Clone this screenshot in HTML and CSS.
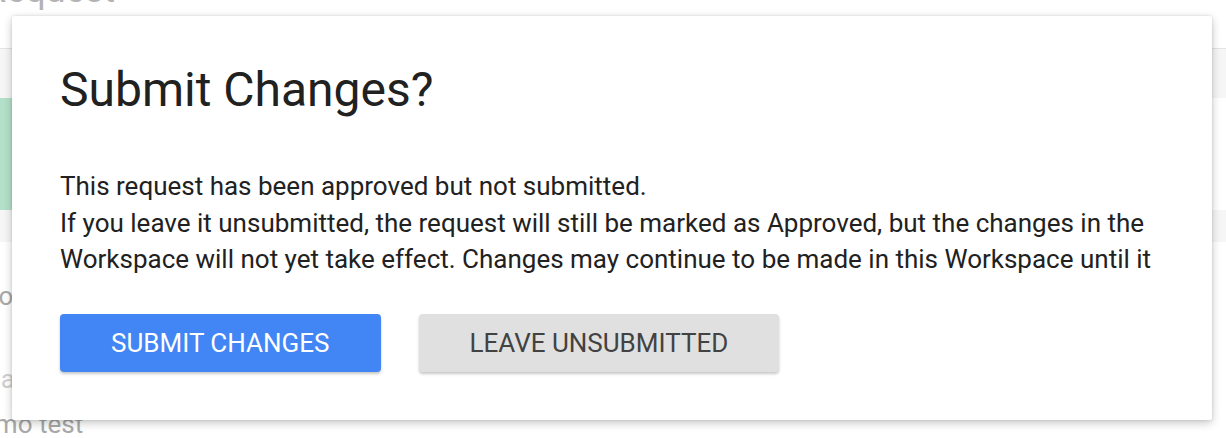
FILE: index.html
```html
<!DOCTYPE html>
<html lang="en">
<head>
<meta charset="utf-8">
<title>Submit Changes?</title>
<link rel="stylesheet" href="styles.css">
</head>
<body>
<div class="page">
  <h1 class="page-title">Request</h1>
  <div class="table">
    <div class="table-head"></div>
    <div class="status-row"><div class="status-block"></div></div>
    <div class="table-subhead"></div>
    <div class="fields">
      <div class="field field-info">Info</div>
      <div class="field field-plan">Plan</div>
      <div class="field field-name">Demo test</div>
    </div>
  </div>
</div>

<div class="dialog" role="dialog" aria-labelledby="dlg-title">
  <h2 class="dialog-title" id="dlg-title">Submit Changes?</h2>
  <div class="dialog-body">
    This request has been approved but not submitted.<br>
    If you leave it unsubmitted, the request will still be marked as Approved, but the changes in the Workspace will not yet take effect. Changes may continue to be made in this Workspace until it is submitted.
  </div>
  <div class="dialog-actions">
    <button class="btn btn-primary">Submit Changes</button>
    <button class="btn btn-secondary">Leave Unsubmitted</button>
  </div>
</div>
</body>
</html>
```

FILE: styles.css
```css
* { box-sizing: border-box; }

html, body {
  margin: 0;
  padding: 0;
  background: #ffffff;
  font-family: Roboto, "Liberation Sans", Arial, sans-serif;
  overflow: hidden;
  height: 438px;
}

/* ---------- background page ---------- */
.page {
  width: 100%;
}

.page-title {
  margin: -28px 0 0 -16px;
  font-size: 36px;
  line-height: 36px;
  font-weight: 400;
  color: #b3b3b3;
}

.table-head {
  margin-top: 40px;
  height: 50px;
  border-top: 1px solid #e4e4e4;
  background: #f6f6f6;
}

.status-row {
  height: 112px;
  background: #ffffff;
}

.status-block {
  width: 420px;
  height: 100%;
  background: #b3e0c9;
}

.table-subhead {
  height: 32px;
  background: #f6f6f6;
}

.fields {
  display: flex;
  flex-direction: column;
  padding-top: 36px;
}

.field {
  font-size: 26px;
  line-height: 36px;
  color: #a8a8a8;
  white-space: nowrap;
}

.field-info { margin-left: -32px; }
.field-plan { margin-left: -22px; margin-top: 47px; color: #cfcfcf; }
.field-name { margin-left: -36px; margin-top: 9px; }

/* ---------- dialog ---------- */
.dialog {
  position: absolute;
  left: 12px;
  top: 16px;
  width: 1200px;
  height: 404px;
  padding: 46px 48px 48px;
  background: #ffffff;
  border-radius: 2px;
  box-shadow: 0 3px 10px rgba(0, 0, 0, 0.22), 0 0 3px rgba(0, 0, 0, 0.12);
  display: flex;
  flex-direction: column;
}

.dialog-title {
  margin: 0;
  font-size: 48px;
  line-height: 56px;
  font-weight: 400;
  color: #212121;
}

.dialog-body {
  margin-top: 50px;
  height: 110px;
  overflow: hidden;
  font-size: 26px;
  line-height: 36.5px;
  color: #212121;
}

.dialog-actions {
  margin-top: 36px;
  display: flex;
  gap: 38px;
}

.btn {
  height: 58px;
  padding: 0 51px;
  border: none;
  border-radius: 4px;
  font-family: Roboto, "Liberation Sans", Arial, sans-serif;
  font-size: 26px;
  font-weight: 400;
  text-transform: uppercase;
  box-shadow: 0 2px 3px rgba(0, 0, 0, 0.22);
  cursor: pointer;
}

.btn-primary {
  background: #4285f4;
  color: #ffffff;
}

.btn-secondary {
  background: #e0e0e0;
  color: #424242;
}
```
